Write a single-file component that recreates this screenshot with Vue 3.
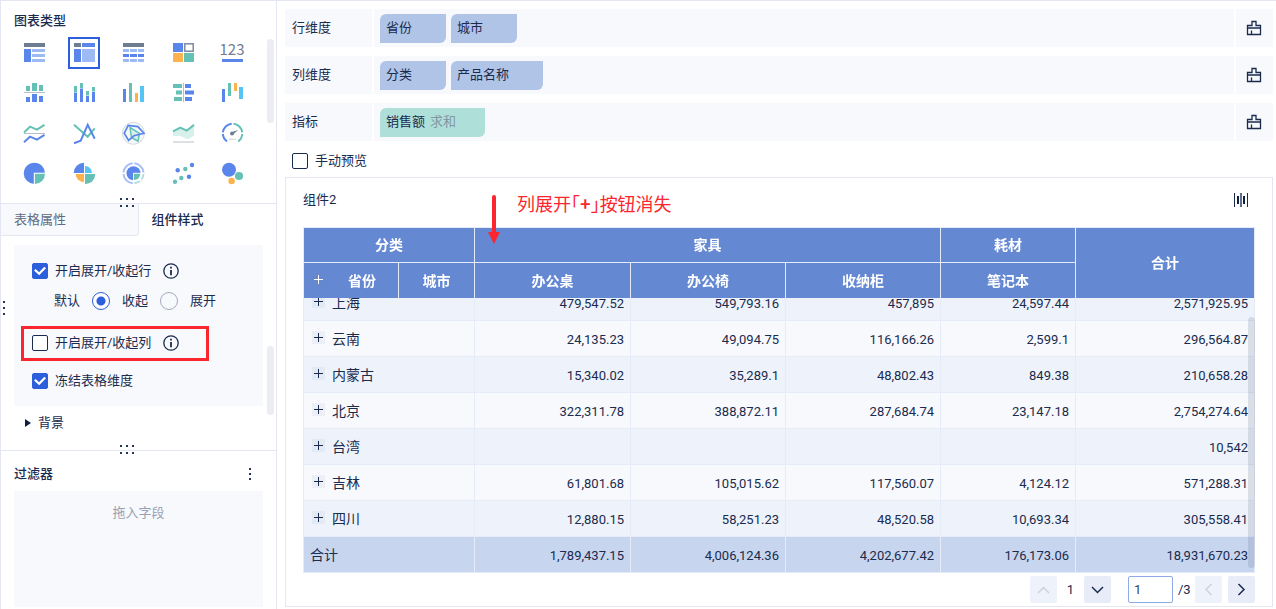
<script setup>
import { ref, onMounted } from 'vue'

const chart = ref('cross')
const expandRows = ref(true)
const expandCols = ref(false)
const freeze = ref(true)
const mode = ref('collapse')
const manual = ref(false)
const page = ref('1')
const scroller = ref(null)

const B = '#5a85ea'
const L = '#9dbaf4'
const T = '#65c1b6'
const G = '#6f7d92'
const O = '#fdb24d'
const C = '#54c5f5'
const S = '#b9bfca'
const r = (x, y, width, height, fill) => ({ t: 'rect', x, y, width, height, fill })
const c = (cx, cy, rad, fill) => ({ t: 'circle', cx, cy, r: rad, fill })
const l = (points, stroke, fill = 'none', w = 2) => ({ t: 'polyline', points, stroke, fill, 'stroke-width': w })
const p = (d, fill, stroke = 'none', w = 1.7) => ({ t: 'path', d, fill, stroke, 'stroke-width': w })

const icons = [
  { id: 'group', name: '分组表', s: [r(6, 6, 21, 4, G), r(6, 12, 7, 13, B), r(14, 12, 13, 3, L), r(14, 17, 13, 3, L), r(14, 22, 13, 3, L)] },
  { id: 'cross', name: '交叉表', s: [r(6, 6, 7, 4, G), r(14, 6, 13, 4, B), r(6, 12, 7, 13, B), r(14, 12, 13, 13, L)] },
  { id: 'detail', name: '明细表', s: [r(6, 6, 21, 4, G), ...[[12, L], [17, B], [22, L]].flatMap(([y, f]) => [r(6, y, 6, 3, f), r(13, y, 7, 3, f), r(21, y, 6, 3, f)])] },
  { id: 'color', name: '颜色表格', s: [r(6, 6, 10, 9, B), { t: 'rect', x: 17.8, y: 6.8, width: 8.4, height: 7.4, fill: '#fff', stroke: '#7d899d', 'stroke-width': 1.5 }, r(6, 16, 10, 9, O), r(17, 16, 10, 9, T)] },
  { id: 'kpi', name: '指标卡', s: [r(6, 22, 21, 3, B)], label: '123' },
  { id: 'compare', name: '对比柱状图', s: [r(8, 9, 4, 5, T), r(14, 6, 5, 8, T), r(21, 8, 4, 6, T), r(6, 15, 21, 1, S), r(8, 20, 4, 5, B), r(14, 17, 5, 8, B), r(21, 19, 4, 6, B)] },
  { id: 'stack', name: '堆积柱状图', s: [r(6, 9, 3, 6, T), r(6, 15.5, 3, 9.5, B), r(12, 6, 3, 5, T), r(12, 11.5, 3, 13.5, B), r(18, 14, 3, 4.5, T), r(18, 19, 3, 6, B), r(24, 10, 3, 4.5, T), r(24, 15, 3, 10, B)] },
  { id: 'bar', name: '柱状图', s: [r(6, 12, 3, 13, B), r(12, 6, 3, 19, T), r(18, 16, 3, 9, O), r(23, 9, 4, 16, C)] },
  { id: 'bidir', name: '对比条形图', s: [r(6, 7, 9, 4, T), r(9, 13.5, 6, 4, T), r(7, 20, 8, 4, T), r(16, 6, 1, 19, S), r(18, 7, 6, 4, B), r(18, 13.5, 9, 4, B), r(18, 20, 7, 4, B)] },
  { id: 'waterfall', name: '瀑布图', s: [r(6, 12, 3, 13, B), r(12, 6, 3, 13, T), r(18, 6, 3, 8, O), r(23, 10, 4, 12, C)] },
  { id: 'multi', name: '多系列折线图', s: [l('6,15.4 12,9.7 19,12.7 26.5,7.8', T), r(6, 16, 21, 1, S), l('6,25.2 12,19.7 19,22.7 26.5,17.8', B)] },
  { id: 'line', name: '折线图', s: [l('6,7.7 19.7,19.7 26.7,11.3', T), l('6,26.3 12.7,23.7 19.7,7.8 26.7,21.7', B)] },
  { id: 'radar', name: '雷达图', s: [{ t: 'circle', cx: 16.4, cy: 16.3, r: 11, fill: '#f6f7f9', stroke: '#d3d7de', 'stroke-width': 1 }, p('M13 10.5 22.4 16.3 21 24.2 14.5 20.5Z', '#d9f0ed', T, 1.5), p('M7.2 16.3 11.2 8.3 20.9 9.6 26.9 16.3 16.9 18.8 11.6 23.5Z', 'none', B, 1.7)] },
  { id: 'area', name: '面积图', s: [p('M6 14.3 13.3 10.7 19.7 13.7 27 7.7V18.7L20.7 22.3 13 18.7 6 19.3Z', '#d6f0eb'), l('6,14.3 13.3,10.7 19.7,13.7 27,7.9', T), r(6, 24.5, 21, 1, S)] },
  { id: 'gauge', name: '仪表盘', s: [p('M11 24.4A9.7 9.7 0 0 1 6.9 17M6.9 15.4A9.7 9.7 0 0 1 15.7 6.7', 'none', B, 2), p('M17.5 6.7A9.7 9.7 0 0 1 26.2 15.4M26.2 17A9.7 9.7 0 0 1 22.2 24.4', 'none', T, 2), c(16, 16.4, 2, G), p('M15.7 15.2 22 13 16.9 17.8Z', G), r(13, 21.8, 7, 1, '#cdd2da')] },
  { id: 'pie', name: '饼图', s: [c(16.4, 16.3, 10.6, B), p('M15.8 15.7H27.9V27.5H15.8Z', '#fff'), p('M16.9 16.8H27A10.1 10.1 0 0 1 16.9 26.9Z', T)] },
  { id: 'rose', name: '玫瑰图', s: [p('M16 16V5.7A10.3 10.3 0 0 0 5.7 16Z', B), p('M17 16V9A7 7 0 0 1 24 16Z', C), p('M17 17H27.3A10.3 10.3 0 0 1 17 27.2Z', T), p('M16 17V25.3A8.3 8.3 0 0 1 7.7 17Z', O)] },
  { id: 'ring', name: '多层饼图', s: [p('M15.8 26.3A10 10 0 0 1 6.5 17M6.5 15.5A10 10 0 0 1 15.8 6.3M17.3 6.3A10 10 0 0 1 26.5 15.5', 'none', '#a9c0f4', 2), p('M26.5 17A10 10 0 0 1 17.3 26.3', 'none', '#b0dfd9', 2), c(16.5, 16.3, 7, B), p('M16.1 15.8H24.4V24H16.1Z', '#fff'), p('M17 16.8H23.3A6.3 6.3 0 0 1 17 23Z', T)] },
  { id: 'scatter', name: '散点图', s: [c(10.7, 13.3, 2.2, B), c(18.3, 12, 2.2, T), c(25, 8, 2.2, B), c(8, 24.7, 2.2, T), c(14.3, 21, 2.2, T), c(22, 19.7, 2.2, B)] },
  { id: 'bubble', name: '气泡图', s: [c(13, 12.7, 7, B), c(23, 19, 4.1, T), c(15.6, 24, 3.2, O)] }
]

const shelves = [
  { name: '行维度', chips: [{ t: '省份' }, { t: '城市' }] },
  { name: '列维度', chips: [{ t: '分类' }, { t: '产品名称' }] },
  { name: '指标', chips: [{ t: '销售额', agg: '求和' }] }
]

const rows = [
  ['上海', '479,547.52', '549,793.16', '457,895', '24,597.44', '2,571,925.95'],
  ['云南', '24,135.23', '49,094.75', '116,166.26', '2,599.1', '296,564.87'],
  ['内蒙古', '15,340.02', '35,289.1', '48,802.43', '849.38', '210,658.28'],
  ['北京', '322,311.78', '388,872.11', '287,684.74', '23,147.18', '2,754,274.64'],
  ['台湾', '', '', '', '', '10,542'],
  ['吉林', '61,801.68', '105,015.62', '117,560.07', '4,124.12', '571,288.31'],
  ['四川', '12,880.15', '58,251.23', '48,520.58', '10,693.34', '305,558.41']
]
const totals = ['1,789,437.15', '4,006,124.36', '4,202,677.42', '176,173.06', '18,931,670.23']

onMounted(() => {
  scroller.value.scrollTop = scroller.value.scrollHeight
})
</script>

<template>
  <div class="app">
    <aside class="side">
      <section class="types">
        <h2>图表类型</h2>
        <div class="icons">
          <button v-for="i in icons" :key="i.id" type="button" class="type" :class="{ on: chart === i.id }" :aria-label="i.name" @click="chart = i.id">
            <svg width="32" height="32" viewBox="0 0 32 32">
              <component :is="s.t" v-for="(s, k) in i.s" :key="k" v-bind="{ ...s, t: null }" />
              <text v-if="i.label" x="16" y="18" text-anchor="middle" class="num">{{ i.label }}</text>
            </svg>
          </button>
        </div>
        <span class="thumb thumb-types"></span>
        <span class="grip"><i v-for="n in 6" :key="n"></i></span>
      </section>

      <section class="props">
        <nav class="tabs">
          <button type="button" class="tab">表格属性</button>
          <button type="button" class="tab active">组件样式</button>
        </nav>
        <div class="panel">
          <div class="line">
            <label class="opt"><input v-model="expandRows" type="checkbox" class="check" />开启展开/收起行</label>
            <svg class="info" width="16" height="16" viewBox="0 0 16 16"><circle cx="8" cy="8" r="7.2" /><path d="M8 7v5.2M8 3.8v1.8" /></svg>
          </div>
          <div class="line modes">
            <span>默认</span>
            <label><input v-model="mode" type="radio" name="mode" value="collapse" class="radio" />收起</label>
            <label><input v-model="mode" type="radio" name="mode" value="expand" class="radio" />展开</label>
          </div>
          <div class="line cols">
            <label class="opt"><input v-model="expandCols" type="checkbox" class="check" />开启展开/收起列</label>
            <svg class="info" width="16" height="16" viewBox="0 0 16 16"><circle cx="8" cy="8" r="7.2" /><path d="M8 7v5.2M8 3.8v1.8" /></svg>
            <span class="mark"></span>
          </div>
          <div class="line freeze">
            <label class="opt"><input v-model="freeze" type="checkbox" class="check" />冻结表格维度</label>
          </div>
        </div>
        <button type="button" class="fold"><svg width="6" height="10" viewBox="0 0 6 10"><path d="M0 1 6 5 0 9Z" /></svg>背景</button>
        <span class="thumb thumb-props"></span>
        <span class="grip"><i v-for="n in 6" :key="n"></i></span>
      </section>

      <section class="filter">
        <header>
          <h2>过滤器</h2>
          <button type="button" class="more" aria-label="更多"><i></i><i></i><i></i></button>
        </header>
        <div class="drop">拖入字段</div>
      </section>
      <span class="edge"><i></i><i></i><i></i></span>
    </aside>

    <main class="main">
      <div class="shelves">
        <div v-for="s in shelves" :key="s.name" class="shelf">
          <div class="shelf-name">{{ s.name }}</div>
          <div class="chips">
            <span v-for="k in s.chips" :key="k.t" class="chip" :class="{ measure: k.agg }">{{ k.t }}<em v-if="k.agg">{{ k.agg }}</em></span>
          </div>
          <button type="button" class="clear" aria-label="清空">
            <svg width="16" height="16" viewBox="0 0 16 16"><path d="M1.5 14.5V5.5H6V1.5H10V5.5H14.5V14.5ZM1.5 8H14.5M5.5 10.5V14.5" /></svg>
          </button>
        </div>
      </div>

      <label class="manual"><input v-model="manual" type="checkbox" class="check" />手动预览</label>

      <section class="card">
        <header class="card-head">
          <h3>组件2</h3>
          <button type="button" class="fit" aria-label="列宽">
            <svg width="16" height="14" viewBox="0 0 16 14"><path d="M1 0h1v14H1zM14 0h1v14h-1z" fill="#1b2c4f" /><path d="M7 0h2v14H7z" fill="#5f6f8c" /><path d="M4 3h2v8H4zM10 3h2v8h-2z" fill="#0d2044" /></svg>
          </button>
        </header>

        <div class="grid">
          <div ref="scroller" class="scroll">
            <table>
              <colgroup>
                <col class="w1" /><col class="w2" /><col class="w3" /><col class="w4" /><col class="w4" /><col class="w5" /><col class="w6" />
              </colgroup>
              <thead>
                <tr>
                  <th colspan="2">分类</th>
                  <th colspan="3">家具</th>
                  <th>耗材</th>
                  <th rowspan="2">合计</th>
                </tr>
                <tr>
                  <th class="prov"><button type="button" class="plus" aria-label="展开全部"></button><span>省份</span></th>
                  <th>城市</th>
                  <th>办公桌</th>
                  <th>办公椅</th>
                  <th>收纳柜</th>
                  <th>笔记本</th>
                </tr>
              </thead>
              <tbody>
                <tr v-for="row in rows" :key="row[0]">
                  <td colspan="2" class="name"><button type="button" class="plus" aria-label="展开"></button>{{ row[0] }}</td>
                  <td v-for="(v, k) in row.slice(1)" :key="k">{{ v }}</td>
                </tr>
              </tbody>
              <tfoot>
                <tr>
                  <td colspan="2" class="name">合计</td>
                  <td v-for="v in totals" :key="v">{{ v }}</td>
                </tr>
              </tfoot>
            </table>
          </div>
          <span class="thumb-table"></span>
        </div>

        <div class="pager">
          <button type="button" class="pg off" aria-label="上一组"><svg width="13" height="8" viewBox="0 0 13 8"><path d="M1 7 6.5 1.5 12 7" /></svg></button>
          <span class="cur">1</span>
          <button type="button" class="pg" aria-label="下一组"><svg width="13" height="8" viewBox="0 0 13 8"><path d="M1 1 6.5 6.5 12 1" /></svg></button>
          <input v-model="page" class="page" aria-label="页码" />
          <span class="of">/3</span>
          <button type="button" class="pg off" aria-label="上一页"><svg width="9" height="13" viewBox="0 0 9 13"><path d="M7.5 1 2 6.5 7.5 12" /></svg></button>
          <button type="button" class="pg next" aria-label="下一页"><svg width="9" height="13" viewBox="0 0 9 13"><path d="M1.5 1 7 6.5 1.5 12" /></svg></button>
        </div>

        <svg class="arrow" width="12" height="49" viewBox="0 0 12 49"><path d="M4 2a2 2 0 0 1 4 0V37H12L6 49 0 37H4Z" fill="#fb262e" /></svg>
        <p class="note">列展开<span>「<b>+</b>」</span>按钮消失</p>
      </section>
    </main>
  </div>
</template>

<style>
body {
  margin: 0;
  background: #fff;
}
</style>

<style scoped>
* {
  box-sizing: border-box;
}
.app {
  display: grid;
  grid-template-columns: 277px minmax(0, 1fr);
  height: 100vh;
  min-height: 560px;
  border-top: 1px solid #e4e7f1;
  font: 13px/20px Roboto, "Noto Sans CJK SC", sans-serif;
  color: #1a2b4e;
}
button {
  padding: 0;
  border: 0;
  background: none;
  font: inherit;
  color: inherit;
  cursor: pointer;
}
h2,
h3,
p {
  margin: 0;
}
h2 {
  font-size: 13px;
  font-weight: 500;
  line-height: 20px;
}
svg {
  display: block;
}
.side {
  position: relative;
  display: flex;
  flex-direction: column;
  min-height: 0;
  border: solid #e4e7f1;
  border-width: 0 1px;
}
section {
  position: relative;
}
.types {
  z-index: 1;
  flex: none;
  height: 203px;
  padding: 10px 28px 0 17px;
  border-bottom: 1px solid #e4e7f1;
}
.types h2 {
  margin-left: -4px;
}
.icons {
  display: grid;
  grid-template-columns: repeat(5, 32px);
  justify-content: space-between;
  row-gap: 8px;
  margin-top: 6px;
}
.type {
  position: relative;
  width: 32px;
  height: 32px;
}
.type.on {
  outline: 2px solid #2b5fdb;
  outline-offset: -2px;
}
.num {
  font: 15px "Noto Sans CJK SC", sans-serif;
  fill: #6f7d92;
}
.thumb {
  position: absolute;
  right: 2px;
  width: 7px;
  border-radius: 4px;
  background: #ecedf2;
}
.thumb-types {
  top: 38px;
  height: 84px;
}
.thumb-props {
  top: 142px;
  height: 69px;
}
.grip {
  position: absolute;
  left: 119px;
  bottom: -4px;
  z-index: 1;
  display: grid;
  grid-template-columns: repeat(3, 2px);
  gap: 5px 4px;
}
.grip i,
.edge i,
.more i {
  width: 2px;
  height: 2px;
  background: #24365a;
}
.edge {
  position: absolute;
  left: 2px;
  top: 300px;
  display: grid;
  gap: 4px;
}
.props {
  flex: none;
  height: 247px;
  border-bottom: 1px solid #e4e7f1;
}
.tabs {
  display: flex;
  height: 32px;
}
.tab {
  width: 138px;
  padding-left: 13px;
  text-align: left;
}
.tab:not(.active) {
  border: solid #e4e7f1;
  border-width: 0 1px 1px 0;
  border-radius: 0 0 4px 0;
  background: #f7f9fd;
  color: #5e6b84;
}
.tab.active {
  font-weight: 500;
}
.panel {
  margin: 9px 13px 0;
  padding: 14px 0 13px 18px;
  background: #f7f9fd;
}
.line {
  position: relative;
  display: flex;
  align-items: center;
  height: 24px;
}
.opt {
  display: flex;
  align-items: center;
  gap: 7px;
}
.info {
  margin-left: 12px;
  fill: none;
  stroke: #1a2b4e;
  stroke-width: 1.3;
}
.info path {
  stroke-width: 1.8;
}
.modes {
  gap: 12px;
  margin-top: 6px;
  padding-left: 22px;
}
.modes label {
  display: flex;
  align-items: center;
  gap: 12px;
}
.cols {
  margin-top: 18px;
}
.freeze {
  margin-top: 14px;
}
.mark {
  position: absolute;
  left: -11px;
  top: -5px;
  width: 188px;
  height: 35px;
  border: 3px solid #fb262e;
  pointer-events: none;
}
.check {
  display: grid;
  place-items: center;
  flex: none;
  appearance: none;
  width: 16px;
  height: 16px;
  margin: 0;
  border: 1px solid #1a2b4e;
  border-radius: 2px;
  background: #fff;
}
.check:checked {
  border-color: #2b5fdb;
  background: #2b5fdb;
}
.check:checked::after {
  content: "";
  width: 12px;
  height: 9px;
  background: #fff;
  clip-path: polygon(0 45%, 14% 28%, 42% 65%, 86% 3%, 100% 20%, 43% 98%);
}
.radio {
  appearance: none;
  width: 18px;
  height: 18px;
  margin: 0;
  border: 1px solid #a3abba;
  border-radius: 50%;
}
.radio:checked {
  border-color: #2b5fdb;
  background: radial-gradient(circle, #2b5fdb 0 4px, #fff 5px);
}
.fold {
  display: flex;
  align-items: center;
  gap: 7px;
  margin: 7px 0 0 24px;
}
.fold svg {
  fill: #0d2044;
}
.filter {
  display: flex;
  flex: 1;
  flex-direction: column;
  min-height: 0;
  padding: 13px 13px 2px;
}
.filter header {
  display: flex;
  align-items: center;
  justify-content: space-between;
}
.more {
  display: grid;
  gap: 3px;
  margin-right: 12px;
}
.drop {
  flex: 1;
  margin-top: 7px;
  padding-top: 12px;
  background: #f7f9fd;
  color: #98a1b3;
  text-align: center;
}
.main {
  display: flex;
  flex-direction: column;
  min-height: 0;
  padding: 8px 3px 2px 8px;
}
.shelves {
  display: grid;
  gap: 9px;
}
.shelf {
  display: grid;
  grid-template-columns: 87px minmax(0, 1fr) 37px;
  gap: 2px;
  height: 38px;
}
.shelf > * {
  display: flex;
  align-items: center;
  background: #f7f9fd;
}
.shelf-name {
  padding-left: 7px;
}
.chips {
  gap: 5px;
  padding-left: 6px;
}
.chip {
  display: flex;
  align-items: center;
  gap: 5px;
  height: 29px;
  padding: 0 34px 0 6px;
  border-radius: 6px 0 6px 0;
  background: #b0c4e8;
}
.measure {
  padding-right: 29px;
  background: #aedfd9;
}
.chip em {
  font-style: normal;
  color: #8497a3;
}
.clear {
  justify-content: center;
  padding-right: 1px;
}
.clear svg {
  fill: none;
  stroke: #1a2b4e;
  stroke-width: 1.3;
}
.manual {
  display: flex;
  align-items: center;
  align-self: flex-start;
  gap: 7px;
  margin: 10px 0 0 7px;
}
.card {
  display: flex;
  flex: 1;
  flex-direction: column;
  min-height: 0;
  margin-top: 6px;
  padding: 0 17px 3px;
  border: 1px solid #e4e7f1;
}
.card-head {
  display: flex;
  align-items: center;
  justify-content: space-between;
  height: 44px;
  flex: none;
}
.card-head h3 {
  font-size: 13px;
  font-weight: 400;
}
.fit {
  margin-right: 6px;
}
.grid {
  position: relative;
  flex: 1;
  min-height: 0;
  margin-top: 5px;
}
.scroll {
  height: 100%;
  overflow: auto;
  scrollbar-width: none;
  border-top: 1px solid #e5ebf8;
}
.thumb-table {
  position: absolute;
  right: 0;
  top: 90px;
  bottom: 5px;
  width: 7px;
  border-radius: 4px;
  background: rgba(90, 105, 135, 0.18);
}
table {
  width: 100%;
  table-layout: fixed;
  border-collapse: separate;
  border-spacing: 0;
  border-left: 1px solid #e5ebf8;
}
.w1 { width: 95px; }
.w2 { width: 76px; }
.w3 { width: 156px; }
.w4 { width: 155px; }
.w5 { width: 135px; }
.w6 { width: 179px; }
thead {
  position: sticky;
  top: 0;
  z-index: 1;
}
th {
  height: 35px;
  padding: 0;
  border: solid #e5ebf8;
  border-width: 0 1px 1px 0;
  background: #6488d2;
  color: #fff;
  font-size: 14px;
  font-weight: 700;
}
thead tr:last-child th,
th[rowspan] {
  border-bottom: 0;
}
.prov {
  position: relative;
  padding-left: 22px;
}
.prov .plus {
  position: absolute;
  left: 8px;
  top: 10px;
}
td {
  height: 36px;
  padding: 2px 6px 0 0;
  border: solid #e5ebf8;
  border-width: 0 1px 1px 0;
  background: #f7f9fd;
  text-align: right;
}
tbody tr:nth-child(odd) td {
  background: #eef3fb;
}
tfoot td {
  background: #c8d5ef;
}
td.name {
  padding: 0 0 0 6px;
  font-size: 14px;
  text-align: left;
}
.plus {
  width: 13px;
  height: 13px;
  background:
    linear-gradient(currentColor, currentColor) center / 9px 1px no-repeat,
    linear-gradient(currentColor, currentColor) center / 1px 9px no-repeat,
    rgba(120, 130, 150, 0.08);
}
td .plus {
  margin: 0 7px 0 2px;
}
.pager {
  display: flex;
  align-items: center;
  justify-content: flex-end;
  flex: none;
  height: 27px;
  margin-top: 3px;
}
.pg {
  display: grid;
  place-items: center;
  width: 27px;
  height: 27px;
  border-radius: 2px;
  background: #e7ecf8;
}
.pg svg {
  fill: none;
  stroke: #1a2b4e;
  stroke-width: 1.5;
}
.pg.off {
  background: #eef2fb;
}
.pg.off svg {
  stroke: #ccd2de;
}
.cur {
  width: 27px;
  text-align: center;
}
.page {
  width: 45px;
  height: 27px;
  margin-left: 17px;
  padding: 0 5px;
  border: 1px solid #8fabe8;
  border-radius: 2px;
  background: #fff;
  color: #33435f;
  font: inherit;
}
.of {
  width: 22px;
  padding-left: 5px;
}
.next {
  margin-left: 6px;
}
.arrow {
  position: absolute;
  z-index: 2;
  left: 202px;
  top: 17px;
}
.note {
  position: absolute;
  left: 231px;
  top: 12px;
  color: #fb262e;
  font-size: 18px;
  line-height: 26px;
}
.note span {
  font-family: "Noto Sans CJK SC", sans-serif;
  font-feature-settings: "halt";
}
</style>
